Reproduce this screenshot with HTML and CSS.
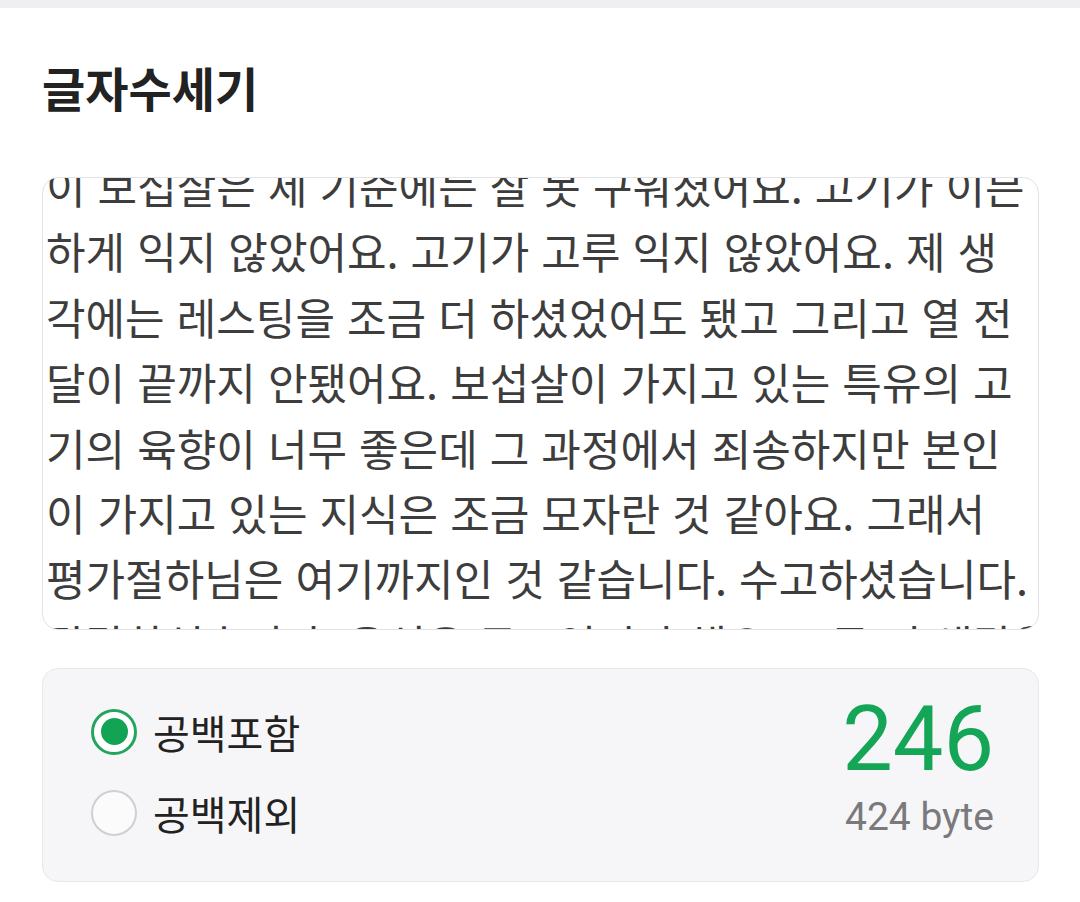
FILE: index.html
```html
<!DOCTYPE html>
<html lang="ko">
<head>
<meta charset="utf-8">
<title>글자수세기</title>
<link rel="stylesheet" href="styles.css">
</head>
<body>
<div class="topbar"></div>
<main class="page">
  <h1 class="title">글자수세기</h1>
  <div class="editor">
    <div class="editor-text">
      <span class="line">이 보섭살은 제 기준에는 잘 못 구워졌어요. 고기가 이븐</span>
      <span class="line">하게 익지 않았어요. 고기가 고루 익지 않았어요. 제 생</span>
      <span class="line">각에는 레스팅을 조금 더 하셨었어도 됐고 그리고 열 전</span>
      <span class="line">달이 끝까지 안됐어요. 보섭살이 가지고 있는 특유의 고</span>
      <span class="line">기의 육향이 너무 좋은데 그 과정에서 죄송하지만 본인</span>
      <span class="line">이 가지고 있는 지식은 조금 모자란 것 같아요. 그래서</span>
      <span class="line">평가절하님은 여기까지인 것 같습니다. 수고하셨습니다.</span>
      <span class="line">탈락하셨습니다. 음식은 무르익어야 해요. 조금 더 생각을</span>
    </div>
  </div>
  <section class="result">
    <div class="options">
      <label class="option">
        <span class="radio radio-on"></span>
        <span class="option-label">공백포함</span>
      </label>
      <label class="option">
        <span class="radio"></span>
        <span class="option-label">공백제외</span>
      </label>
    </div>
    <div class="count">
      <div class="count-num">246</div>
      <div class="count-byte">424 byte</div>
    </div>
  </section>
</main>
</body>
</html>
```
FILE: styles.css
```css
html, body {
  margin: 0;
  padding: 0;
  background: #ffffff;
}
body {
  font-family: "Noto Sans CJK KR", "Noto Sans", sans-serif;
  color: #222222;
}
.topbar {
  height: 8px;
  background: #efeff1;
}
.page {
  padding: 0 41px 0 42px;
}
.title {
  margin: 49px 0 0 0;
  font-size: 47px;
  line-height: 60px;
  font-weight: 700;
  color: #222222;
  letter-spacing: 0;
}
.editor {
  margin-top: 60px;
  height: 453px;
  box-sizing: border-box;
  border: 1px solid #e3e3e5;
  border-radius: 16px;
  overflow: hidden;
  background: #ffffff;
}
.editor-text {
  margin-top: -25px;
  padding-left: 3px;
  font-size: 43px;
  line-height: 65.4px;
  color: #3d3d3d;
}
.line {
  display: block;
  white-space: nowrap;
}
.result {
  margin-top: 38px;
  height: 214px;
  box-sizing: border-box;
  border: 1px solid #e8e8ea;
  border-radius: 16px;
  background: #f6f6f8;
  display: flex;
  justify-content: space-between;
  align-items: flex-start;
  padding: 22px 44px 0 48px;
}
.options {
  display: flex;
  flex-direction: column;
}
.option {
  display: flex;
  align-items: center;
  height: 81px;
  gap: 16px;
}
.radio {
  width: 46px;
  height: 46px;
  box-sizing: border-box;
  border-radius: 50%;
  border: 2.5px solid #cfcfd1;
  background: #fbfbfc;
  position: relative;
}
.radio-on {
  border: 3px solid #23a55e;
  background: #ffffff;
}
.radio-on::after {
  content: "";
  position: absolute;
  left: 50%;
  top: 50%;
  width: 27px;
  height: 27px;
  margin: -13.5px 0 0 -13.5px;
  border-radius: 50%;
  background: #12a454;
}
.option-label {
  font-size: 40px;
  line-height: 50px;
  color: #222222;
}
.count {
  margin-top: 4px;
  display: flex;
  flex-direction: column;
  align-items: flex-end;
  font-family: Roboto, "Noto Sans", sans-serif;
}
.count-num {
  font-size: 90px;
  line-height: 90px;
  color: #14a556;
}
.count-byte {
  margin-top: 13px;
  font-size: 39px;
  line-height: 39px;
  color: #7a7a7c;
}
```
